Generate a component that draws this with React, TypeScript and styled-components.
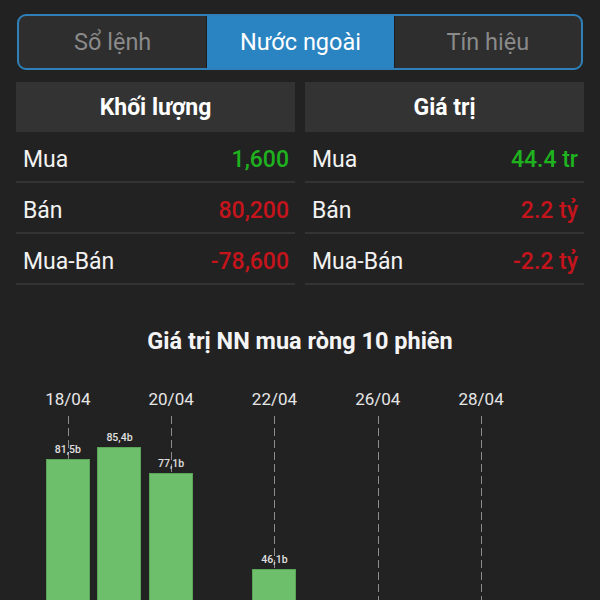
import React from "react";
import styled, { createGlobalStyle } from "styled-components";

const GlobalStyle = createGlobalStyle`
  html, body { margin: 0; padding: 0; background: #222222; }
  body { font-family: Roboto, "Noto Sans", "Liberation Sans", sans-serif; color: #ffffff; }
  * { box-sizing: border-box; }
`;

const Page = styled.div`
  width: 600px;
  height: 600px;
  overflow: hidden;
  background: #222222;
`;

const Top = styled.div`
  padding: 14px 16px 0 16px;
`;

const TabBar = styled.div`
  display: grid;
  grid-template-columns: repeat(3, 1fr);
  height: 56px;
  margin-left: 1px;
  margin-right: 1px;
  border: 2px solid #2f80b8;
  border-radius: 9px;
  overflow: hidden;
  background: #2e2e2e;
`;

const Tab = styled.div<{ $active?: boolean }>`
  display: flex;
  align-items: center;
  justify-content: center;
  font-size: 23.5px;
  color: ${(p) => (p.$active ? "#ffffff" : "#8a8a8a")};
  background: ${(p) => (p.$active ? "#2a84c2" : "transparent")};
  & + & {
    border-left: 1px solid #1c1c1c;
  }
`;

const Stats = styled.div`
  display: grid;
  grid-template-columns: 1fr 1fr;
  column-gap: 10px;
  margin-top: 12px;
`;

const Table = styled.div`
  display: flex;
  flex-direction: column;
`;

const Header = styled.div`
  height: 50px;
  background: #333333;
  display: flex;
  align-items: center;
  justify-content: center;
  font-size: 23px;
  font-weight: 700;
  color: #ffffff;
`;

const Row = styled.div`
  height: 51px;
  display: flex;
  align-items: center;
  justify-content: space-between;
  padding: 5px 6px 0 7px;
  border-bottom: 2px solid #333333;
  font-size: 23px;
`;

const Label = styled.span`
  color: #f2f2f2;
`;

const Value = styled.span<{ $tone: "up" | "down" }>`
  font-weight: 500;
  color: ${(p) => (p.$tone === "up" ? "#1fb21f" : "#c5141c")};
`;

const ChartTitle = styled.div`
  margin-top: 44px;
  line-height: 24px;
  text-align: center;
  font-size: 23.5px;
  font-weight: 700;
  color: #f4f4f4;
`;

const Chart = styled.div`
  margin-top: 36px;
  padding-left: 42px;
  display: grid;
  grid-template-columns: repeat(10, 51.67px);
  height: 323px;
`;

const Column = styled.div`
  display: flex;
  flex-direction: column;
  align-items: center;
`;

const DateLabel = styled.div`
  height: 20px;
  line-height: 20px;
  font-size: 17px;
  color: #e6e6e6;
  white-space: nowrap;
`;

const Plot = styled.div`
  position: relative;
  flex: 1;
  width: 100%;
  display: flex;
  flex-direction: column;
  justify-content: flex-end;
  align-items: center;
`;

const GridLine = styled.div`
  position: absolute;
  top: 7px;
  bottom: 0;
  left: 50%;
  width: 1px;
  background: repeating-linear-gradient(
    to bottom,
    #8c8c8c 0px,
    #8c8c8c 8px,
    transparent 8px,
    transparent 12px
  );
`;

const BarValue = styled.div`
  position: relative;
  font-size: 10.5px;
  line-height: 14px;
  font-weight: 500;
  color: #e0e0e0;
  margin-bottom: 2px;
`;

const Bar = styled.div`
  position: relative;
  z-index: 1;
  width: 44px;
  background: #6dbf6b;
  border: 1px solid #5aa558;
`;

type Session = { date: string; value: number | null; showDate: boolean };

const sessions: Session[] = [
  { date: "18/04", value: 81.5, showDate: true },
  { date: "19/04", value: 85.4, showDate: false },
  { date: "20/04", value: 77.1, showDate: true },
  { date: "21/04", value: null, showDate: false },
  { date: "22/04", value: 46.1, showDate: true },
  { date: "25/04", value: null, showDate: false },
  { date: "26/04", value: null, showDate: true },
  { date: "27/04", value: null, showDate: false },
  { date: "28/04", value: null, showDate: true },
  { date: "29/04", value: null, showDate: false },
];

const PX_PER_UNIT = 3.104;

const volume = [
  { label: "Mua", value: "1,600", tone: "up" as const },
  { label: "Bán", value: "80,200", tone: "down" as const },
  { label: "Mua-Bán", value: "-78,600", tone: "down" as const },
];

const amount = [
  { label: "Mua", value: "44.4 tr", tone: "up" as const },
  { label: "Bán", value: "2.2 tỷ", tone: "down" as const },
  { label: "Mua-Bán", value: "-2.2 tỷ", tone: "down" as const },
];

function StatTable({ title, rows }: { title: string; rows: typeof volume }) {
  return (
    <Table>
      <Header>{title}</Header>
      {rows.map((r) => (
        <Row key={r.label}>
          <Label>{r.label}</Label>
          <Value $tone={r.tone}>{r.value}</Value>
        </Row>
      ))}
    </Table>
  );
}

export default function App() {
  return (
    <>
      <GlobalStyle />
      <Page>
        <Top>
          <TabBar>
            <Tab>Sổ lệnh</Tab>
            <Tab $active>Nước ngoài</Tab>
            <Tab>Tín hiệu</Tab>
          </TabBar>
          <Stats>
            <StatTable title="Khối lượng" rows={volume} />
            <StatTable title="Giá trị" rows={amount} />
          </Stats>
        </Top>
        <ChartTitle>Giá trị NN mua ròng 10 phiên</ChartTitle>
        <Chart>
          {sessions.map((s) => (
            <Column key={s.date}>
              <DateLabel>{s.showDate ? s.date : ""}</DateLabel>
              <Plot>
                {s.showDate && <GridLine />}
                {s.value !== null && s.value > 0 && (
                  <>
                    <BarValue>{s.value.toFixed(1).replace(".", ",")}b</BarValue>
                    <Bar style={{ height: `${s.value * PX_PER_UNIT}px` }} />
                  </>
                )}
              </Plot>
            </Column>
          ))}
        </Chart>
      </Page>
    </>
  );
}
